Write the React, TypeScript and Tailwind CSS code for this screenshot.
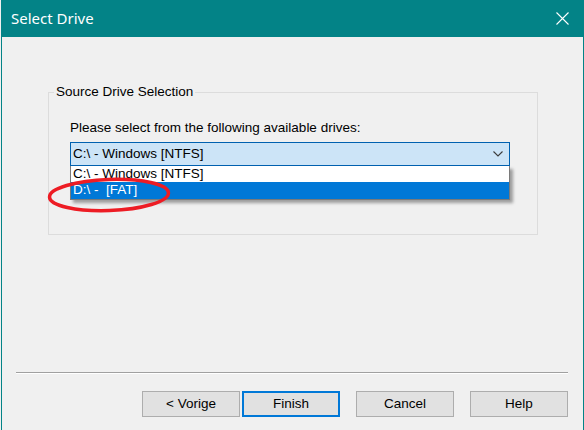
const buttons = [
  { label: '< Vorige', focused: false },
  { label: 'Finish', focused: true },
  { label: 'Cancel', focused: false },
  { label: 'Help', focused: false },
];

export default function App() {
  return (
    <div className="relative w-[584px] h-[430px] bg-[#f0f0f0] pl-px font-['Liberation_Sans',Arial,sans-serif] text-[13.5px] text-black">
      <div className="h-full flex flex-col border-x border-[#038387]">
        {/* title bar */}
        <div className="h-[37px] shrink-0 bg-[#038387] flex items-center justify-between pl-[9px] pr-[14px]">
          <span className="text-white text-[15px] font-['Noto_Sans',sans-serif] leading-none pb-[1px]">Select Drive</span>
          <svg width="13" height="13" viewBox="0 0 13 13">
            <path d="M0.5 0.5 L12.5 12.5 M12.5 0.5 L0.5 12.5" stroke="white" strokeWidth="1.1" />
          </svg>
        </div>

        <div className="flex-1 flex flex-col">
          {/* group box */}
          <div className="relative mt-[55px] ml-[46px] w-[490px] h-[143px] border border-[#dcdcdc] pl-[21px] pt-[27px]">
            <span className="absolute -top-[9px] left-[5px] px-[2px] bg-[#f0f0f0] leading-4">Source Drive Selection</span>
            <div className="leading-4">Please select from the following available drives:</div>

            <div className="relative mt-[6px] w-[440px]">
              <div className="h-[24px] border border-[#0061b0] bg-[#cce4f7] flex items-center justify-between pl-[2px] pr-[5px]">
                <span className="leading-4">C:\ - Windows [NTFS]</span>
                <svg width="10" height="6" viewBox="0 0 10 6" className="mr-[1px]">
                  <path d="M0.5 0.5 L5 5 L9.5 0.5" fill="none" stroke="#3c3c3c" strokeWidth="1.1" />
                </svg>
              </div>
              <div className="absolute left-0 top-[24px] w-[440px] border-x border-b border-[#7a7a7a] bg-white shadow-[3px_3px_3px_rgba(0,0,0,0.35)]">
                <div className="h-[16px] pl-[2px] leading-4">C:\ - Windows [NTFS]</div>
                <div className="h-[17px] pl-[2px] leading-4 bg-[#0078d7] text-white">D:\ -&nbsp; [FAT]</div>
              </div>
            </div>
          </div>

          {/* footer */}
          <div className="mt-auto ml-[14px] w-[552px] h-[2px] border-t border-[#a0a0a0] border-b border-b-white" />
          <div className="flex ml-[140px] mt-[17px] mb-[13px] gap-[16px]">
            <div className="flex gap-[2px]">
              {buttons.slice(0, 2).map((b) => (
                <Button key={b.label} label={b.label} focused={b.focused} />
              ))}
            </div>
            {buttons.slice(2).map((b) => (
              <Button key={b.label} label={b.label} focused={b.focused} />
            ))}
          </div>
        </div>
      </div>

      {/* red marker ellipse */}
      <svg className="absolute left-[46px] top-[175px]" width="126" height="40" viewBox="0 0 126 40">
        <ellipse cx="63" cy="20" rx="59.5" ry="15.5" fill="none" stroke="#ed1c24" strokeWidth="3.5" transform="rotate(-2 63 20)" />
      </svg>
    </div>
  );
}

function Button({ label, focused }: { label: string; focused: boolean }) {
  return (
    <div
      className={
        focused
          ? 'w-[98px] h-[26px] bg-[#e1e1e1] border-2 border-[#0078d7] flex items-center justify-center'
          : 'w-[98px] h-[26px] bg-[#e1e1e1] border border-[#adadad] flex items-center justify-center'
      }
    >
      {label}
    </div>
  );
}
